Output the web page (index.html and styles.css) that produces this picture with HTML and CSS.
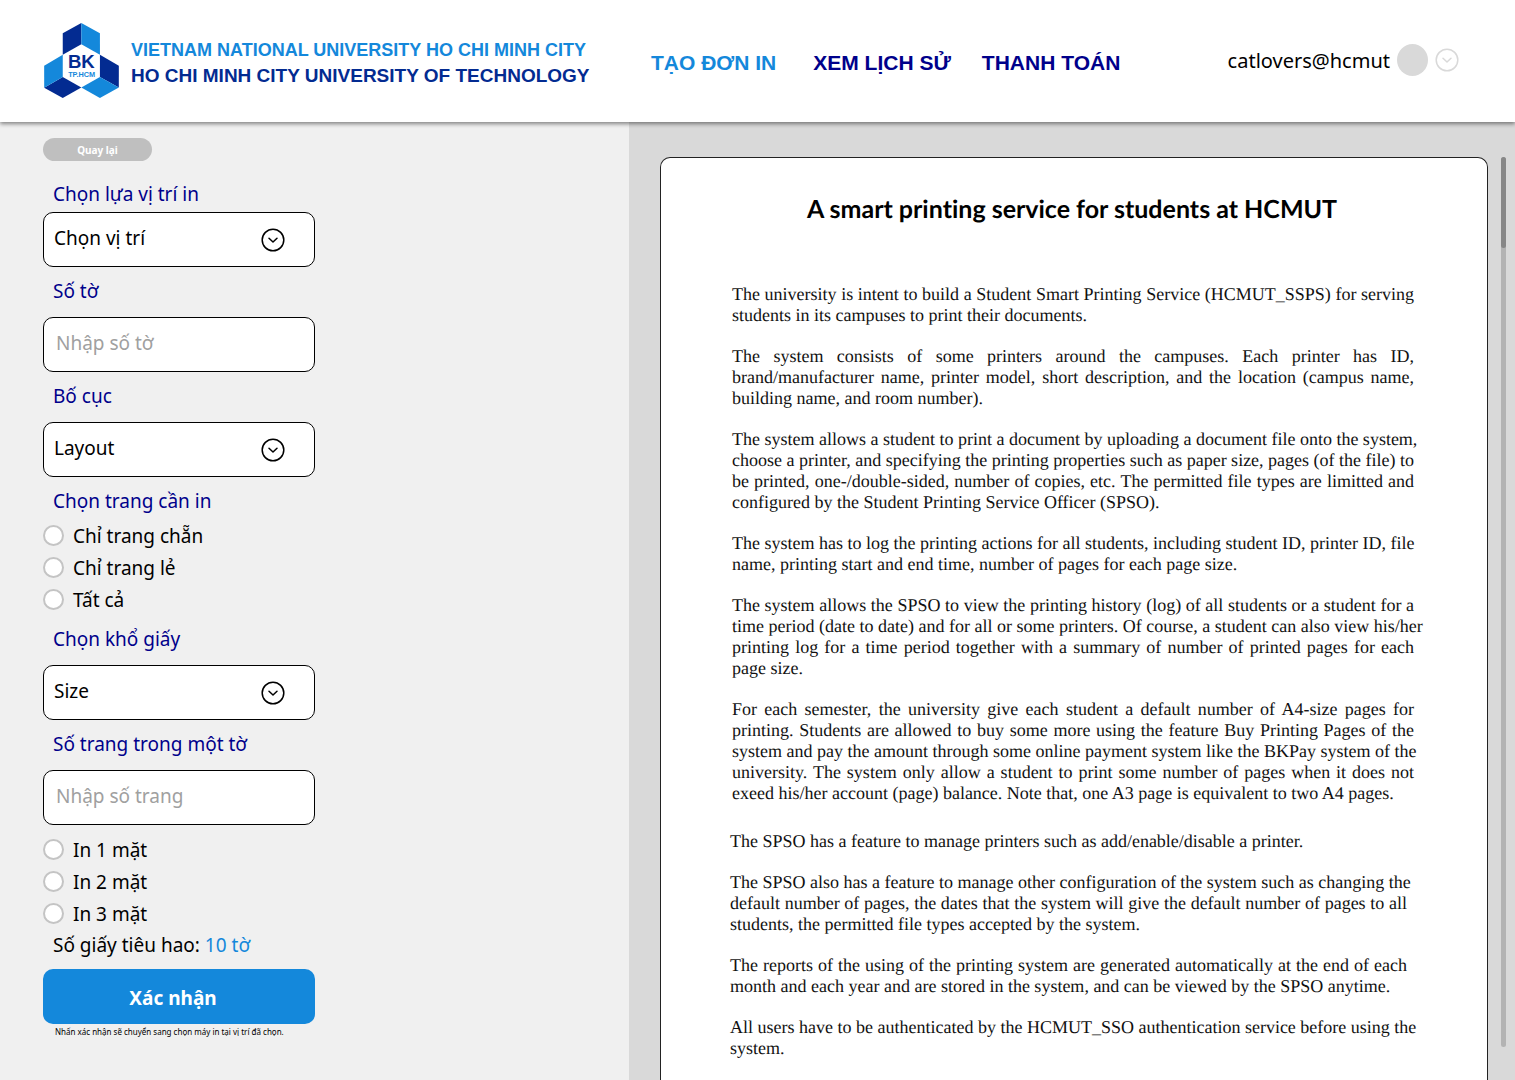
FILE: index.html
```html
<!DOCTYPE html>
<html lang="vi">
<head>
<meta charset="utf-8">
<meta name="viewport" content="width=device-width, initial-scale=1">
<title>HCMUT SSPS - Tạo đơn in</title>
<link rel="stylesheet" href="styles.css">
</head>
<body>
<header class="topbar">
  <a class="brand" href="#">
    <svg class="brand-logo" viewBox="42 38 225 226" aria-hidden="true">
      <g fill="#032b91">
        <path d="M98 69 154 38V102L98 134Z"/>
        <path d="M210 134 267 167V232L210 201Z"/>
        <path d="M42 233 98 201 154 232 98 264Z"/>
      </g>
      <g fill="#1488db">
        <path d="M154 38 210 69V134L154 102Z"/>
        <path d="M42 167 98 134V201L42 233Z"/>
        <path d="M154 232 210 201 267 232 210 264Z"/>
      </g>
      <text class="logo-bk" x="154" y="175" text-anchor="middle">BK</text>
      <text class="logo-city" x="155" y="200" text-anchor="middle">TP.HCM</text>
    </svg>
    <span class="brand-text">
      <span class="brand-parent">VIETNAM NATIONAL UNIVERSITY HO CHI MINH CITY</span>
      <span class="brand-name">HO CHI MINH CITY UNIVERSITY OF TECHNOLOGY</span>
    </span>
  </a>
  <nav class="nav">
    <a class="nav-link nav-link--active" href="#">TẠO ĐƠN IN</a>
    <a class="nav-link" href="#">XEM LỊCH SỬ</a>
    <a class="nav-link" href="#">THANH TOÁN</a>
  </nav>
  <div class="account">
    <span class="account-name">catlovers@hcmut</span>
    <span class="avatar"></span>
    <button class="account-toggle" type="button" aria-label="Tài khoản">
      <svg class="chevron" viewBox="0 0 24 24" aria-hidden="true"><circle cx="12" cy="12" r="10.8"/><path d="M8 10.2 12 14 16 10.2"/></svg>
    </button>
  </div>
</header>

<main class="workspace">
  <form class="settings">
    <button class="back" type="button">Quay lại</button>

    <label class="label label--first" for="place">Chọn lựa vị trí in</label>
    <div class="picker">
      <select class="field" id="place"><option>Chọn vị trí</option></select>
      <svg class="chevron" viewBox="0 0 24 24" aria-hidden="true"><circle cx="12" cy="12" r="10.8"/><path d="M8 10.2 12 14 16 10.2"/></svg>
    </div>

    <label class="label" for="sheets">Số tờ</label>
    <input class="field" id="sheets" type="text" placeholder="Nhập số tờ">

    <label class="label" for="layout">Bố cục</label>
    <div class="picker">
      <select class="field" id="layout"><option>Layout</option></select>
      <svg class="chevron" viewBox="0 0 24 24" aria-hidden="true"><circle cx="12" cy="12" r="10.8"/><path d="M8 10.2 12 14 16 10.2"/></svg>
    </div>

    <fieldset class="choices">
      <legend class="label">Chọn trang cần in</legend>
      <label class="choice"><input class="radio" type="radio" name="pages">Chỉ trang chẵn</label>
      <label class="choice"><input class="radio" type="radio" name="pages">Chỉ trang lẻ</label>
      <label class="choice"><input class="radio" type="radio" name="pages">Tất cả</label>
    </fieldset>

    <label class="label" for="size">Chọn khổ giấy</label>
    <div class="picker">
      <select class="field" id="size"><option>Size</option></select>
      <svg class="chevron" viewBox="0 0 24 24" aria-hidden="true"><circle cx="12" cy="12" r="10.8"/><path d="M8 10.2 12 14 16 10.2"/></svg>
    </div>

    <label class="label" for="per-sheet">Số trang trong một tờ</label>
    <input class="field" id="per-sheet" type="text" placeholder="Nhập số trang">

    <div class="choices choices--sides" role="radiogroup" aria-label="Số mặt in">
      <label class="choice"><input class="radio" type="radio" name="sides">In 1 mặt</label>
      <label class="choice"><input class="radio" type="radio" name="sides">In 2 mặt</label>
      <label class="choice"><input class="radio" type="radio" name="sides">In 3 mặt</label>
    </div>

    <p class="usage">Số giấy tiêu hao: <span class="usage-count">10 tờ</span></p>
    <button class="submit" type="submit">Xác nhận</button>
    <p class="hint">Nhấn xác nhận sẽ chuyển sang chọn máy in tại vị trí đã chọn.</p>
  </form>

  <section class="preview">
    <article class="paper" lang="en">
      <h1 class="paper-title">A smart printing service for students at HCMUT</h1>
      <div class="page">
        <p>The university is intent to build a Student Smart Printing Service (HCMUT_SSPS) for serving students in its campuses to print their documents.</p>
        <p>The system consists of some printers around the campuses. Each printer has ID, brand/manufacturer name, printer model, short description, and the location (campus name, building name, and room number).</p>
        <p><span class="line">The system allows a student to print a document by uploading a document file onto the system,</span> <span class="line">choose a printer, and specifying the printing properties such as paper size, pages (of the file) to</span> <span class="line">be printed, one-/double-sided, number of copies, etc. The permitted file types are limitted and</span> configured by the Student Printing Service Officer (SPSO).</p>
        <p><span class="line">The system has to log the printing actions for all students, including student ID, printer ID, file</span> name, printing start and end time, number of pages for each page size.</p>
        <p>The system allows the SPSO to view the printing history (log) of all students or a student for a <span class="line">time period (date to date) and for all or some printers. Of course, a student can also view his/her</span> printing log for a time period together with a summary of number of printed pages for each page size.</p>
        <p>For each semester, the university give each student a default number of A4-size pages for printing. Students are allowed to buy some more using the feature Buy Printing Pages of the <span class="line">system and pay the amount through some online payment system like the BKPay system of the</span> <span class="line">university. The system only allow a student to print some number of pages when it does not</span> exeed his/her account (page) balance. Note that, one A3 page is equivalent to two A4 pages.</p>
      </div>
      <div class="page page--next">
        <p>The SPSO has a feature to manage printers such as add/enable/disable a printer.</p>
        <p><span class="line">The SPSO also has a feature to manage other configuration of the system such as changing the</span> <span class="line">default number of pages, the dates that the system will give the default number of pages to all</span> students, the permitted file types accepted by the system.</p>
        <p>The reports of the using of the printing system are generated automatically at the end of each month and each year and are stored in the system, and can be viewed by the SPSO anytime.</p>
        <p><span class="line">All users have to be authenticated by the HCMUT_SSO authentication service before using the</span> system.</p>
      </div>
    </article>
    <div class="track"><div class="thumb"></div></div>
  </section>
</main>
</body>
</html>
```
FILE: styles.css
```css
* { box-sizing: border-box; }

body {
  margin: 0;
  height: 100vh;
  display: flex;
  flex-direction: column;
  overflow: hidden;
  background: #f0f0f0;
  color: #000;
  font-family: "Noto Sans", sans-serif;
  font-size: 19px;
}

p, h1 { margin: 0; }
button, input, select { font: inherit; color: inherit; }

.topbar {
  position: relative;
  flex: none;
  display: flex;
  align-items: center;
  height: 122px;
  padding: 0 56px 2px 44px;
  background: #fff;
  box-shadow: 0 2px 4px rgba(0, 0, 0, .45);
}

.brand {
  display: flex;
  align-items: center;
  gap: 12px;
  text-decoration: none;
  font: bold 18px/26px "Liberation Sans", Arial, sans-serif;
  white-space: nowrap;
}
.brand-logo { width: 75px; height: 75px; }
.brand-text { display: flex; flex-direction: column; padding-top: 6px; width: 452px; }
.brand-parent { color: #1488db; }
.brand-name { color: #032b91; font-size: 19px; }
.logo-bk { font: bold 56px "Liberation Sans", Arial, sans-serif; fill: #032b91; }
.logo-city { font: bold 22px "Liberation Sans", Arial, sans-serif; fill: #1488db; }

.nav { display: flex; gap: 31px; margin-left: 68px; padding-top: 6px; white-space: nowrap; }
.nav-link {
  color: #00008b;
  text-decoration: none;
  font: bold 21px/28px "Liberation Sans", Arial, sans-serif;
}
.nav-link--active { margin-right: 6px; color: #1488db; }

.account { display: flex; align-items: center; gap: 7px; margin-left: auto; }
.account-name { font-size: 20px; }
.avatar { width: 31px; height: 32px; border-radius: 50%; background: #d9d9d9; }
.account-toggle { display: flex; padding: 0; border: 0; background: none; color: #d9d9d9; }

.chevron {
  width: 24px;
  height: 24px;
  fill: none;
  stroke: currentColor;
  stroke-width: 1.5;
  stroke-linecap: round;
  stroke-linejoin: round;
}

.workspace {
  flex: 1;
  min-height: 0;
  display: grid;
  grid-template-columns: 629fr 886fr;
}

.settings {
  display: flex;
  flex-direction: column;
  align-items: flex-start;
  padding: 16px 43px;
}
.back {
  width: 109px;
  height: 23px;
  padding: 0;
  border: 0;
  border-radius: 12px;
  background: #bfbfbf;
  color: #fff;
  font-size: 10px;
  font-weight: bold;
}
.label {
  margin: 12px 0 14px;
  padding: 0 10px;
  color: #00008b;
  line-height: 24px;
}
.label--first { margin: 21px 0 6px; }

.field {
  width: 272px;
  height: 55px;
  padding: 0 12px 4px;
  border: 1px solid #000;
  border-radius: 10px;
  background: #fff;
  appearance: none;
}
.field::placeholder { color: #a0a0a0; opacity: 1; }
.picker { display: grid; align-items: center; }
.picker .field { grid-area: 1 / 1; padding: 0 60px 4px 10px; }
.picker .chevron { grid-area: 1 / 1; justify-self: end; margin-right: 30px; pointer-events: none; }

.choices {
  display: flex;
  flex-direction: column;
  gap: 11px;
  margin: 12px 0 5px;
  padding: 0;
  border: 0;
}
.choices .label { margin: 0 0 12px; }
.choices--sides { margin: 14px 0 0; }
.choice { display: flex; align-items: center; gap: 9px; height: 21px; }
.radio {
  width: 21px;
  height: 21px;
  margin: 0;
  border: 2px solid #c4c4c4;
  border-radius: 50%;
  background: #fff;
  appearance: none;
}
.radio:checked { background: #1488db; }

.usage { margin: 9px 0 12px; padding: 0 10px; line-height: 24px; }
.usage-count { color: #1488db; }
.submit {
  width: 272px;
  height: 55px;
  padding: 2px 12px 0 0;
  border: 0;
  border-radius: 10px;
  background: #1488db;
  color: #fff;
  font-weight: bold;
}
.hint { padding: 0 12px; font-size: 8px; line-height: 16px; white-space: nowrap; }

.preview {
  display: flex;
  gap: 13px;
  min-width: 0;
  min-height: 0;
  padding: 35px 9px 0 31px;
  background: #d9d9d9;
}
.paper {
  flex: 1;
  min-width: 0;
  overflow: hidden;
  padding: 33px 73px 0 69px;
  border: 1px solid #222;
  border-bottom: 0;
  border-radius: 10px 10px 0 0;
  background: #fff;
  color: #111;
  font: 18px/21px "Liberation Serif", "Times New Roman", serif;
  text-rendering: geometricPrecision;
}
.paper-title {
  color: #000;
  font: bold 25px/36px Lato, sans-serif;
  font-variant-ligatures: none;
  text-align: center;
}
.page {
  display: flex;
  flex-direction: column;
  gap: 20px;
  margin-top: 57px;
  padding-left: 2px;
  text-align: justify;
}
.page--next { margin-top: 27px; padding: 0 7px 0 0; }
.line { white-space: nowrap; }

.track { width: 5px; margin-bottom: 33px; border-radius: 3px; background: #b3b3b3; }
.thumb { height: 91px; border-radius: 3px; background: #878787; }
```
